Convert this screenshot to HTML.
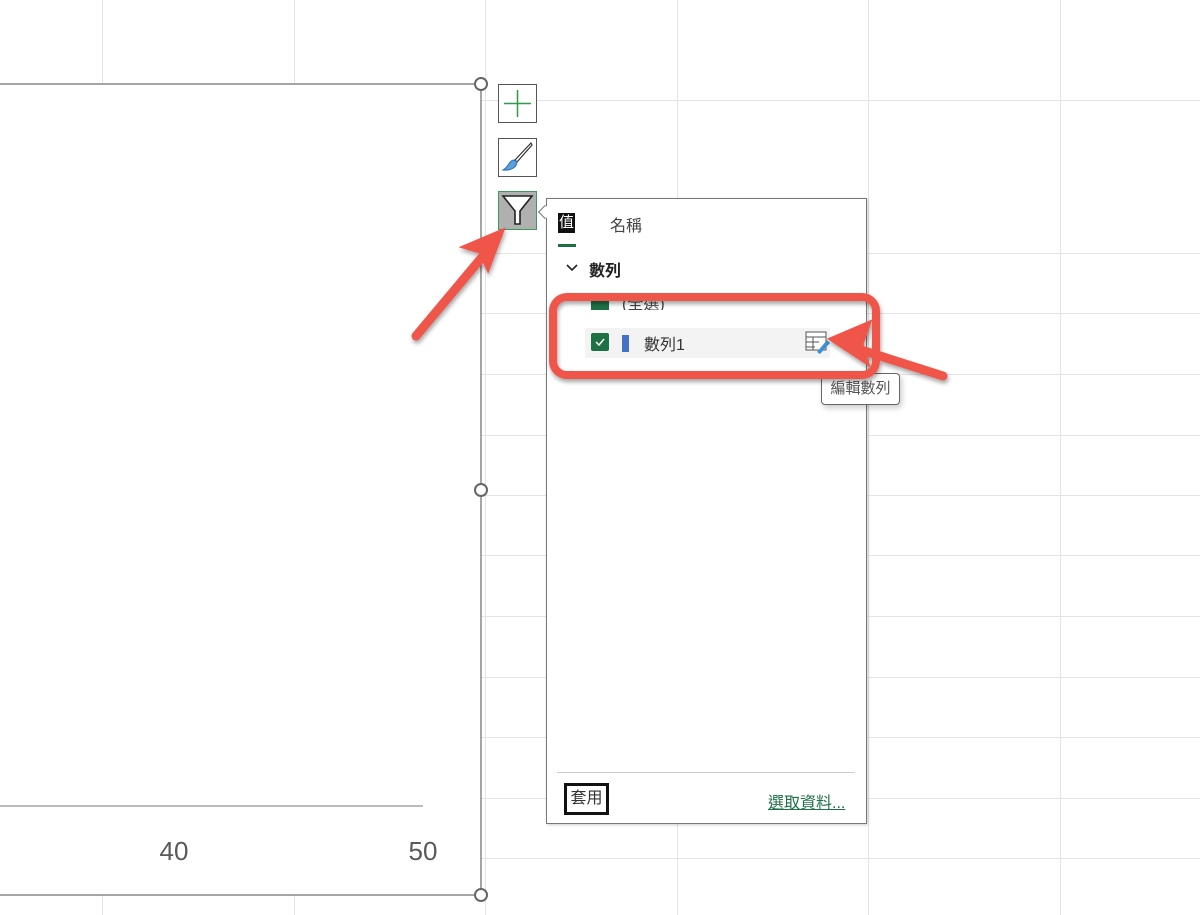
<!DOCTYPE html>
<html><head><meta charset="utf-8"><style>
body{margin:0;width:1200px;height:915px;overflow:hidden;background:#fff;position:relative;font-family:"Liberation Sans","Noto Sans CJK TC",sans-serif;}
.a{position:absolute}
.btn{position:absolute;left:498px;width:39px;height:39px;border:1px solid #555;background:#fff;box-sizing:border-box}
</style></head><body>
<svg class="a" style="left:0;top:0" width="1200" height="915">
<g stroke="#e4e4e4" stroke-width="1">
<line x1="102.5" y1="0" x2="102.5" y2="915"/><line x1="294.5" y1="0" x2="294.5" y2="915"/><line x1="485.5" y1="0" x2="485.5" y2="915"/><line x1="677.5" y1="0" x2="677.5" y2="915"/><line x1="868.5" y1="0" x2="868.5" y2="915"/><line x1="1060.5" y1="0" x2="1060.5" y2="915"/>
<line x1="0" y1="100.5" x2="1200" y2="100.5"/><line x1="0" y1="253.5" x2="1200" y2="253.5"/><line x1="0" y1="313.5" x2="1200" y2="313.5"/><line x1="0" y1="374.5" x2="1200" y2="374.5"/><line x1="0" y1="435.5" x2="1200" y2="435.5"/><line x1="0" y1="495.5" x2="1200" y2="495.5"/><line x1="0" y1="555.5" x2="1200" y2="555.5"/><line x1="0" y1="616.5" x2="1200" y2="616.5"/><line x1="0" y1="677.5" x2="1200" y2="677.5"/><line x1="0" y1="737.5" x2="1200" y2="737.5"/><line x1="0" y1="798.5" x2="1200" y2="798.5"/><line x1="0" y1="858.5" x2="1200" y2="858.5"/>
</g>
<rect x="-5" y="84" width="486" height="811" fill="#fff" stroke="#888" stroke-width="1.5"/>
<line x1="0" y1="806" x2="423" y2="806" stroke="#bbb" stroke-width="2"/>
<text x="174" y="860" font-size="26" fill="#595959" text-anchor="middle" font-family="Liberation Sans">40</text>
<text x="423" y="860" font-size="26" fill="#595959" text-anchor="middle" font-family="Liberation Sans">50</text>
<g fill="#fff" stroke="#666" stroke-width="2"><circle cx="481" cy="84" r="6"/><circle cx="481" cy="490" r="6"/><circle cx="481" cy="895" r="6"/></g>
</svg>
<div class="btn" style="top:84px"><svg width="37" height="37"><path d="M18.5 5V32M5 18.5H32" stroke="#2e9a4e" stroke-width="1.5"/></svg></div>
<div class="btn" style="top:138px"><svg width="37" height="37"><path d="M32 4L16 21L18 23L33 6Z" fill="#fff" stroke="#333" stroke-width="1.2"/><path d="M15 21C10 21 10 28 4 31C12 32 18 28 18 23Z" fill="#5aa0dc" stroke="#2d6fb0"/></svg></div>
<div class="btn" style="top:191px;background:#b0b0b0;border-color:#3c9a5f"><svg width="37" height="37"><path d="M4 4H33L21 19V32H16V19Z" fill="#fff" stroke="#222" stroke-width="1.6"/></svg></div>
<div class="a" style="left:546px;top:198px;width:319px;height:624px;border:1px solid #777;background:#fff;box-shadow:1px 1px 3px rgba(0,0,0,.2)"></div>
<div class="a" style="left:540px;top:207px;width:9px;height:9px;background:#fff;border-left:1px solid #777;border-bottom:1px solid #777;transform:rotate(45deg)"></div>
<div class="a" style="left:558px;top:213px;width:17px;height:20px;background:#111;color:#fff;font-size:15px;line-height:20px;text-align:center">值</div>
<div class="a" style="left:558px;top:244px;width:18px;height:3px;background:#1e7145"></div>
<div class="a" style="left:610px;top:212px;font-size:16px;color:#444">名稱</div>
<svg class="a" style="left:565px;top:263px" width="14" height="10"><path d="M2 2L7 7L12 2" fill="none" stroke="#222" stroke-width="1.6"/></svg>
<div class="a" style="left:589px;top:257px;font-size:16px;font-weight:bold;color:#222">數列</div>
<div class="a" style="left:591px;top:296px;width:18px;height:14px;background:#1e7145"></div>
<div class="a" style="left:622px;top:290px;font-size:16px;color:#444;height:20px;overflow:hidden">(全選)</div>
<div class="a" style="left:585px;top:328px;width:245px;height:30px;background:#f3f3f3"></div>
<div class="a" style="left:591px;top:333px;width:18px;height:18px;background:#1e7145;border-radius:2px"><svg width="18" height="18"><path d="M5 9L8 12L13 6" fill="none" stroke="#fff" stroke-width="1.5"/></svg></div>
<div class="a" style="left:622px;top:335px;width:7px;height:17px;background:#4472c4"></div>
<div class="a" style="left:644px;top:331px;font-size:16px;color:#333">數列1</div>
<svg class="a" style="left:805px;top:331px" width="26" height="24"><rect x="1" y="1" width="20" height="18" fill="#fff" stroke="#555"/><path d="M1 6H21M1 11H14M1 16H10M8 6V19" stroke="#555"/><path d="M12 21L22 9L25 12L15 23Z" fill="#3a8fd6"/></svg>
<div class="a" style="left:821px;top:373px;width:77px;height:30px;border:1px solid #666;border-radius:4px;background:#fff;font-size:15px;color:#555;line-height:30px;text-align:center;box-shadow:2px 3px 6px rgba(0,0,0,.2)">編輯數列</div>
<div class="a" style="left:557px;top:772px;width:298px;height:1px;background:#ccc"></div>
<div class="a" style="left:564px;top:783px;width:45px;height:32px;border:3px solid #111;box-sizing:border-box;font-size:16px;line-height:26px;text-align:center;color:#333">套用</div>
<div class="a" style="left:768px;top:789px;font-size:16px;color:#1e7145;text-decoration:underline">選取資料...</div>
<svg class="a" style="left:0;top:0" width="1200" height="915">
<defs><filter id="s"><feDropShadow dx="1" dy="3" stdDeviation="2" flood-opacity=".35"/></filter></defs>
<g filter="url(#s)" stroke="#f0544a" fill="#f0544a">
<rect x="553" y="297" width="323" height="78" rx="14" fill="none" stroke-width="8"/>
<line x1="416" y1="336" x2="488" y2="250" stroke-width="9" stroke-linecap="round"/>
<path d="M503 230L463 247L480 252L488 270Z" stroke-width="3"/>
<line x1="943" y1="376" x2="855" y2="348" stroke-width="9" stroke-linecap="round"/>
<path d="M830 339L870 322L862 344L868 364Z" stroke-width="3"/>
</g></svg>
</body></html>
